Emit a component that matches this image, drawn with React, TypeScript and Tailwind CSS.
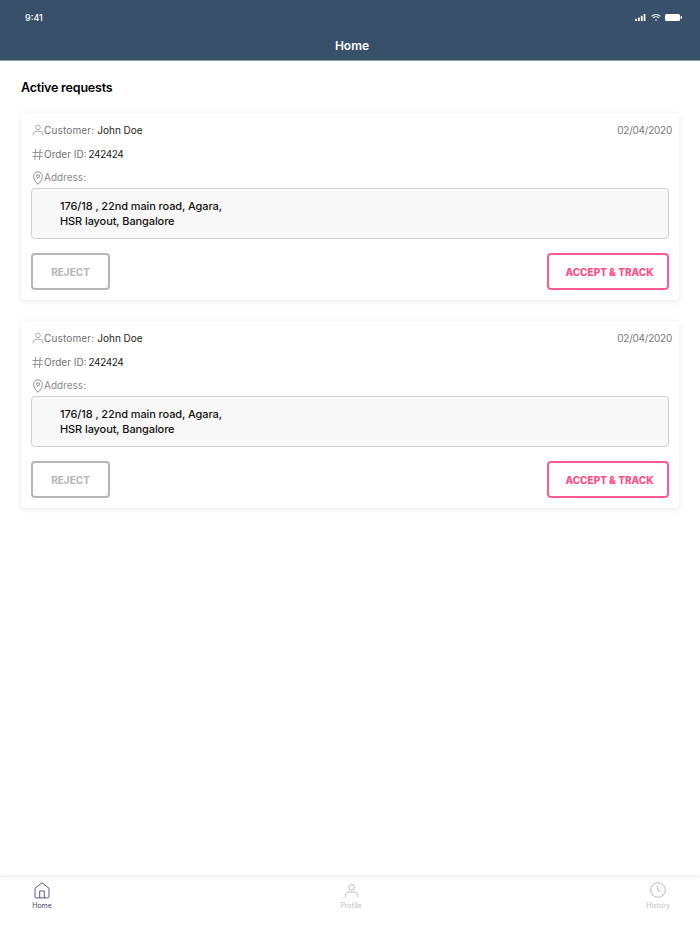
const font = { fontFamily: '"Inter", "Liberation Sans", sans-serif' };

function UserIcon({ size, color, sw = 1 }: { size: number; color: string; sw?: number }) {
  return (
    <svg width={size} height={size} viewBox="0 0 16 16" fill="none" stroke={color} strokeWidth={sw}>
      <circle cx="8" cy="4.5" r="3" />
      <path d="M1.5 15v-1.5C1.5 11 3.5 9.7 5.5 9.7h5c2 0 4 1.3 4 3.8V15" />
    </svg>
  );
}

function HashIcon() {
  return (
    <svg width="11" height="13" viewBox="0 0 12 14" fill="none" stroke="#8f8f8f" strokeWidth="1">
      <path d="M4 1 3 13M9 1 8 13M0.5 4.8h11M0.5 9.2h11" />
    </svg>
  );
}

function PinIcon() {
  return (
    <svg width="10" height="14" viewBox="0 0 10 14" fill="none" stroke="#8f8f8f" strokeWidth="1">
      <path d="M5 13.3C3 11.2.6 8.6.6 5.3a4.4 4.4 0 0 1 8.8 0c0 3.3-2.4 5.9-4.4 8Z" />
      <circle cx="5" cy="5.2" r="1.6" />
    </svg>
  );
}

function Card() {
  return (
    <div className="rounded-[4px] bg-white pt-[5px] pr-[7px] pb-[10px] pl-[10px] shadow-[0_1px_6px_rgba(0,0,0,0.10)]">
      <div className="flex h-[24px] items-center justify-between text-[10px]">
        <div className="flex items-center">
          <span className="flex w-[13px] justify-center"><UserIcon size={12} color="#8f8f8f" /></span>
          <span className="tracking-[0.15px] text-[#707070]">Customer:</span>
          <span className="ml-[3px] text-[#1c1c1c]">John Doe</span>
        </div>
        <span className="tracking-[-0.25px] text-[#777777]">02/04/2020</span>
      </div>
      <div className="flex h-[24px] items-center text-[10px]">
        <span className="flex w-[13px] justify-center"><HashIcon /></span>
        <span className="text-[#707070]">Order ID:</span>
        <span className="ml-[2px] tracking-[-0.4px] text-[#1c1c1c]">242424</span>
      </div>
      <div className="flex h-[22px] items-center pt-[1px] text-[10px]">
        <span className="flex w-[13px] justify-center"><PinIcon /></span>
        <span className="text-[#8a8a8a]">Address:</span>
      </div>
      <div className="mr-[3px] h-[51px] rounded-[4px] border border-[#cfcfcf] bg-[#f8f8f8] pt-[10px] pl-[28px] text-[11px] leading-[15px] font-medium tracking-[-0.1px] text-[#111111]">
        176/18 , 22nd main road, Agara,<br />HSR layout, Bangalore
      </div>
      <div className="mt-[14px] mr-[3px] flex justify-between">
        <div className="flex h-[37px] w-[79px] items-center justify-center rounded-[4px] border-2 border-[#b5b5b5] pt-[1px] text-[10px] font-bold text-[#b4b4b4]">REJECT</div>
        <div className="flex h-[37px] w-[122px] items-center justify-center rounded-[4px] border-2 border-[#fb5b8d] pt-[1px] pl-[3px] text-[10px] font-extrabold text-[#fb4f86]">ACCEPT &amp; TRACK</div>
      </div>
    </div>
  );
}

function NavItem({ label, color, icon }: { label: string; color: string; icon: React.ReactNode }) {
  return (
    <div className="flex w-[60px] flex-col items-center">
      <div className="flex h-[20px] items-center justify-center">{icon}</div>
      <span className="mt-[1px] text-[7px] leading-[10px]" style={{ color }}>{label}</span>
    </div>
  );
}

export default function App() {
  return (
    <div className="flex h-[934px] w-[700px] flex-col overflow-hidden bg-white" style={font}>
      <header className="h-[61px] border-b border-[#8fa0b2] bg-[#385069] text-white">
        <div className="flex h-[35px] items-center justify-between pr-[18px] pl-[25px]">
          <span className="text-[9px] font-medium">9:41</span>
          <div className="flex items-center gap-[4px]">
            <svg className="mr-px" width="11" height="7" viewBox="0 0 12 8" fill="white">
              <rect x="0" y="5.5" width="2" height="2.5" rx=".4" />
              <rect x="3.2" y="4" width="2" height="4" rx=".4" />
              <rect x="6.4" y="2" width="2" height="6" rx=".4" />
              <rect x="9.6" y="0" width="2" height="8" rx=".4" />
            </svg>
            <svg width="10" height="7" viewBox="0 0 11 8" fill="none" stroke="white" strokeWidth="1.2">
              <path d="M.6 2.6a7 7 0 0 1 9.8 0M2.3 4.4a4.6 4.6 0 0 1 6.4 0" />
              <circle cx="5.5" cy="6.8" r=".9" fill="white" stroke="none" />
            </svg>
            <svg width="17" height="7" viewBox="0 0 17 7" fill="white">
              <rect x="0" y="0" width="15" height="7" rx="1.5" />
              <rect x="15.6" y="2.1" width="1.4" height="2.8" rx=".6" />
            </svg>
          </div>
        </div>
        <div className="pl-[4px] text-center text-[12px] leading-[22px] font-semibold">Home</div>
      </header>

      <main className="flex-1 px-[21px]">
        <h1 className="pt-[17px] pb-[16px] text-[12.5px] leading-[19px] font-semibold tracking-[-0.2px] text-black">Active requests</h1>
        <div className="flex flex-col gap-[21px]">
          <Card />
          <Card />
        </div>
      </main>

      <nav className="flex h-[58px] justify-between border-t border-[#f0f0f0] pt-[3px] pr-[12px] pl-[12px] shadow-[0_-1px_3px_rgba(0,0,0,0.04)]">
        <NavItem
          label="Home"
          color="#4a4368"
          icon={
            <svg width="16" height="17" viewBox="0 0 16 17" fill="none" stroke="#5d5880" strokeWidth="1">
              <path d="M8 .8 15 6.3v8.6a1 1 0 0 1-1 1H2a1 1 0 0 1-1-1V6.3Z" />
              <path d="M5.7 15.9V9h4.6v6.9" />
            </svg>
          }
        />
        <div className="ml-[2px]">
          <NavItem label="Profile" color="#bdbdbd" icon={<UserIcon size={15} color="#b8b8b8" />} />
        </div>
        <NavItem
          label="History"
          color="#bdbdbd"
          icon={
            <svg width="16" height="16" viewBox="0 0 16 16" fill="none" stroke="#b8b8b8" strokeWidth="1">
              <circle cx="8" cy="8" r="7.3" />
              <path d="M7.6 4v4.2l2.6 1.6" />
            </svg>
          }
        />
      </nav>
    </div>
  );
}
